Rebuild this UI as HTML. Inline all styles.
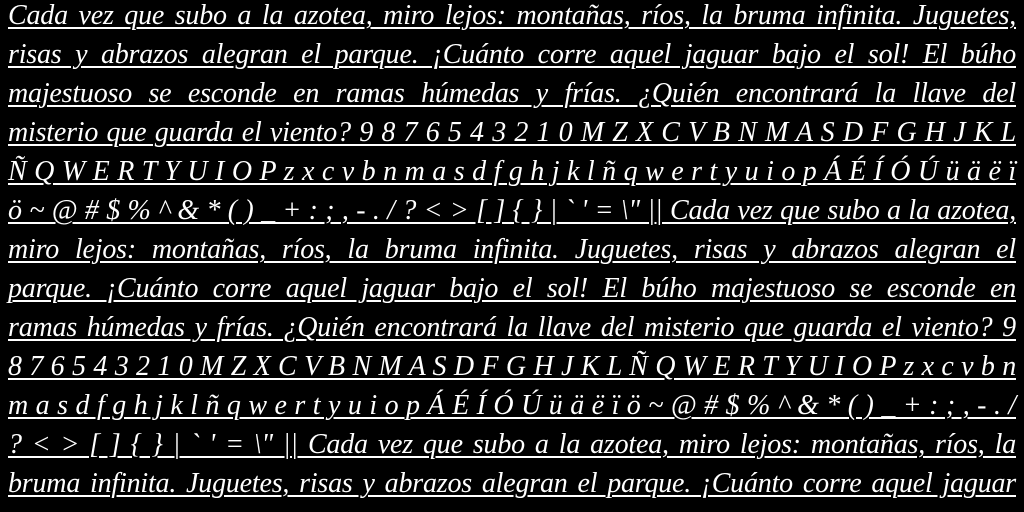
<!DOCTYPE html>
<html><head><meta charset="utf-8"><style>
html,body{margin:0;padding:0;background:#000;width:1024px;height:512px;overflow:hidden}
.w{position:absolute;left:8px;top:-4px;width:1008px;font-family:"Liberation Serif",serif;font-style:italic;font-size:28px;line-height:39px;color:#fff}
.w div{text-align:justify;text-align-last:justify;text-decoration:underline;text-decoration-thickness:2px;text-underline-offset:3px;white-space:nowrap;height:39px;letter-spacing:-0.2px}
</style></head><body><div class="w">
<div>Cada vez que subo a la azotea, miro lejos: montañas, ríos, la bruma infinita. Juguetes,</div>
<div>risas y abrazos alegran el parque. ¡Cuánto corre aquel jaguar bajo el sol! El búho</div>
<div>majestuoso se esconde en ramas húmedas y frías. ¿Quién encontrará la llave del</div>
<div>misterio que guarda el viento? 9 8 7 6 5 4 3 2 1 0 M Z X C V B N M A S D F G H J K L</div>
<div>Ñ Q W E R T Y U I O P z x c v b n m a s d f g h j k l ñ q w e r t y u i o p Á É Í Ó Ú ü ä ë ï</div>
<div>ö ~ @ # $ % ^ &amp; * ( ) _ + : ; , - . / ? &lt; &gt; [ ] { } | ` ' = \" || Cada vez que subo a la azotea,</div>
<div>miro lejos: montañas, ríos, la bruma infinita. Juguetes, risas y abrazos alegran el</div>
<div>parque. ¡Cuánto corre aquel jaguar bajo el sol! El búho majestuoso se esconde en</div>
<div>ramas húmedas y frías. ¿Quién encontrará la llave del misterio que guarda el viento? 9</div>
<div>8 7 6 5 4 3 2 1 0 M Z X C V B N M A S D F G H J K L Ñ Q W E R T Y U I O P z x c v b n</div>
<div>m a s d f g h j k l ñ q w e r t y u i o p Á É Í Ó Ú ü ä ë ï ö ~ @ # $ % ^ &amp; * ( ) _ + : ; , - . /</div>
<div>? &lt; &gt; [ ] { } | ` ' = \" || Cada vez que subo a la azotea, miro lejos: montañas, ríos, la</div>
<div>bruma infinita. Juguetes, risas y abrazos alegran el parque. ¡Cuánto corre aquel jaguar</div>
</div></body></html>
